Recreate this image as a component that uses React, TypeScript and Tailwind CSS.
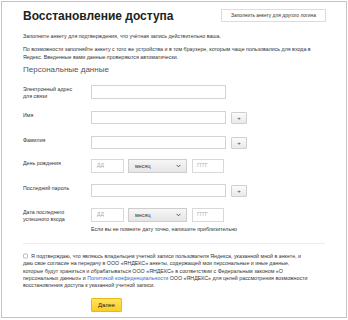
import React from "react";

const font = { fontFamily: '"Liberation Sans", Arial, sans-serif' };

function Label({ children }: { children: React.ReactNode }) {
  return (
    <div className="w-[68px] shrink-0 pt-px text-[5.3px] leading-[7px] text-[#333]">{children}</div>
  );
}

function TextInput() {
  return <div className="h-[13px] w-[135px] border border-[#d3d3d3] bg-white" />;
}

function PlusButton() {
  return (
    <div className="ml-[5px] mt-[1px] flex h-[12px] w-[16px] items-center justify-center rounded-[1px] border border-[#cfcfcf] bg-gradient-to-b from-[#fbfbfb] to-[#e9e9e9] text-[6px] leading-none text-[#444]">
      +
    </div>
  );
}

function DateInputs() {
  return (
    <div className="flex items-start gap-[4px]">
      <div className="flex h-[14px] w-[33px] items-center border border-[#d8d8d8] bg-white pl-[5px] text-[5px] text-[#aaa]">
        ДД
      </div>
      <div className="flex h-[14px] w-[59px] items-center justify-between border border-[#cdcdcd] bg-gradient-to-b from-[#f6f6f6] to-[#e6e6e6] pl-[6px] pr-[5px] text-[5.5px] text-[#333]">
        <span>месяц</span>
        <svg width="5" height="4" viewBox="0 0 5 4">
          <path d="M0.6 0.9 L2.5 2.8 L4.4 0.9" fill="none" stroke="#444" strokeWidth="0.9" />
        </svg>
      </div>
      <div className="ml-[1px] flex h-[14px] w-[32px] items-center border border-[#d8d8d8] bg-white pl-[4px] text-[5px] text-[#aaa]">
        ГГГГ
      </div>
    </div>
  );
}

export default function App() {
  return (
    <div className="h-[320px] w-[348px] bg-white" style={font}>
      <div className="ml-px mt-px h-[317px] w-[346px] border border-[#c4c4c4] bg-white pl-[21px] pr-[20px]">
        {/* Header */}
        <div className="flex items-start justify-between pt-[6px]">
          <h1 className="text-[12px] font-bold leading-[16px] text-[#222]">Восстановление доступа</h1>
          <div className="mt-[1px] flex h-[13px] w-[105px] items-center justify-center border border-[#dcdcdc] bg-white text-[4.9px] text-[#333]">
            Заполнить анкету для другого логина
          </div>
        </div>

        <p className="mt-[9px] text-[5.3px] leading-[7px] text-[#333]">
          Заполните анкету для подтверждения, что учётная запись действительно ваша.
        </p>
        <p className="mt-[6px] whitespace-nowrap text-[5.3px] leading-[7.5px] text-[#333]">
          По возможности заполняйте анкету с того же устройства и в том браузере, которым чаще пользовались для входа в
          <br />
          Яндекс. Введенные вами данные проверяются автоматически.
        </p>

        <h2 className="mt-[4px] text-[8px] leading-[10px] text-[#555]">Персональные данные</h2>

        {/* Form rows */}
        <div className="mt-[10px] flex h-[14px] items-start">
          <Label>
            Электронный адрес
            <br />
            для связи
          </Label>
          <div className="h-[14px] w-[135px] border border-[#d3d3d3] bg-white" />
        </div>

        <div className="mt-[12px] flex h-[13px] items-start">
          <Label>Имя</Label>
          <TextInput />
          <PlusButton />
        </div>

        <div className="mt-[12px] flex h-[13px] items-start">
          <Label>Фамилия</Label>
          <TextInput />
          <PlusButton />
        </div>

        <div className="mt-[10px] flex h-[14px] items-start">
          <Label>День рождения</Label>
          <DateInputs />
        </div>

        <div className="mt-[11px] flex h-[13px] items-start">
          <Label>Последний пароль</Label>
          <TextInput />
          <PlusButton />
        </div>

        <div className="mt-[11px] flex items-start">
          <Label>
            Дата последнего
            <br />
            успешного входа
          </Label>
          <div>
            <DateInputs />
            <p className="mt-[4px] text-[5.3px] leading-[7px] text-[#333]">
              Если вы не помните дату точно, напишите приблизительно
            </p>
          </div>
        </div>

        <div className="mr-[1px] mt-[10px] border-t border-[#ececec]" />

        {/* Consent */}
        <p className="mt-[9px] whitespace-nowrap text-[5.3px] leading-[7.3px] text-[#333]">
          <span className="mr-[3px] inline-block h-[5px] w-[5px] translate-y-[0.5px] rounded-[1px] border border-[#bdbdbd] bg-white align-baseline" />
          Я подтверждаю, что являюсь владельцем учетной записи пользователя Яндекса, указанной мной в анкете, и
          <br />
          даю свое согласие на передачу в ООО «ЯНДЕКС» анкеты, содержащей мои персональные и иные данные,
          <br />
          которые будут храниться и обрабатываться ООО «ЯНДЕКС» в соответствии с Федеральным законом «О
          <br />
          персональных данных» и <span className="text-[#2f6cc5]">Политикой конфиденциальности</span> ООО «ЯНДЕКС» для целей рассмотрения возможности
          <br />
          восстановления доступа к указанной учетной записи.
        </p>

        <div className="ml-[68px] mt-[9px] flex h-[14px] w-[31px] items-center justify-center rounded-[1px] border border-[#e5bb16] bg-gradient-to-b from-[#ffe35c] to-[#f9cd1f] text-[5.8px] text-[#222]">
          Далее
        </div>
      </div>
    </div>
  );
}
